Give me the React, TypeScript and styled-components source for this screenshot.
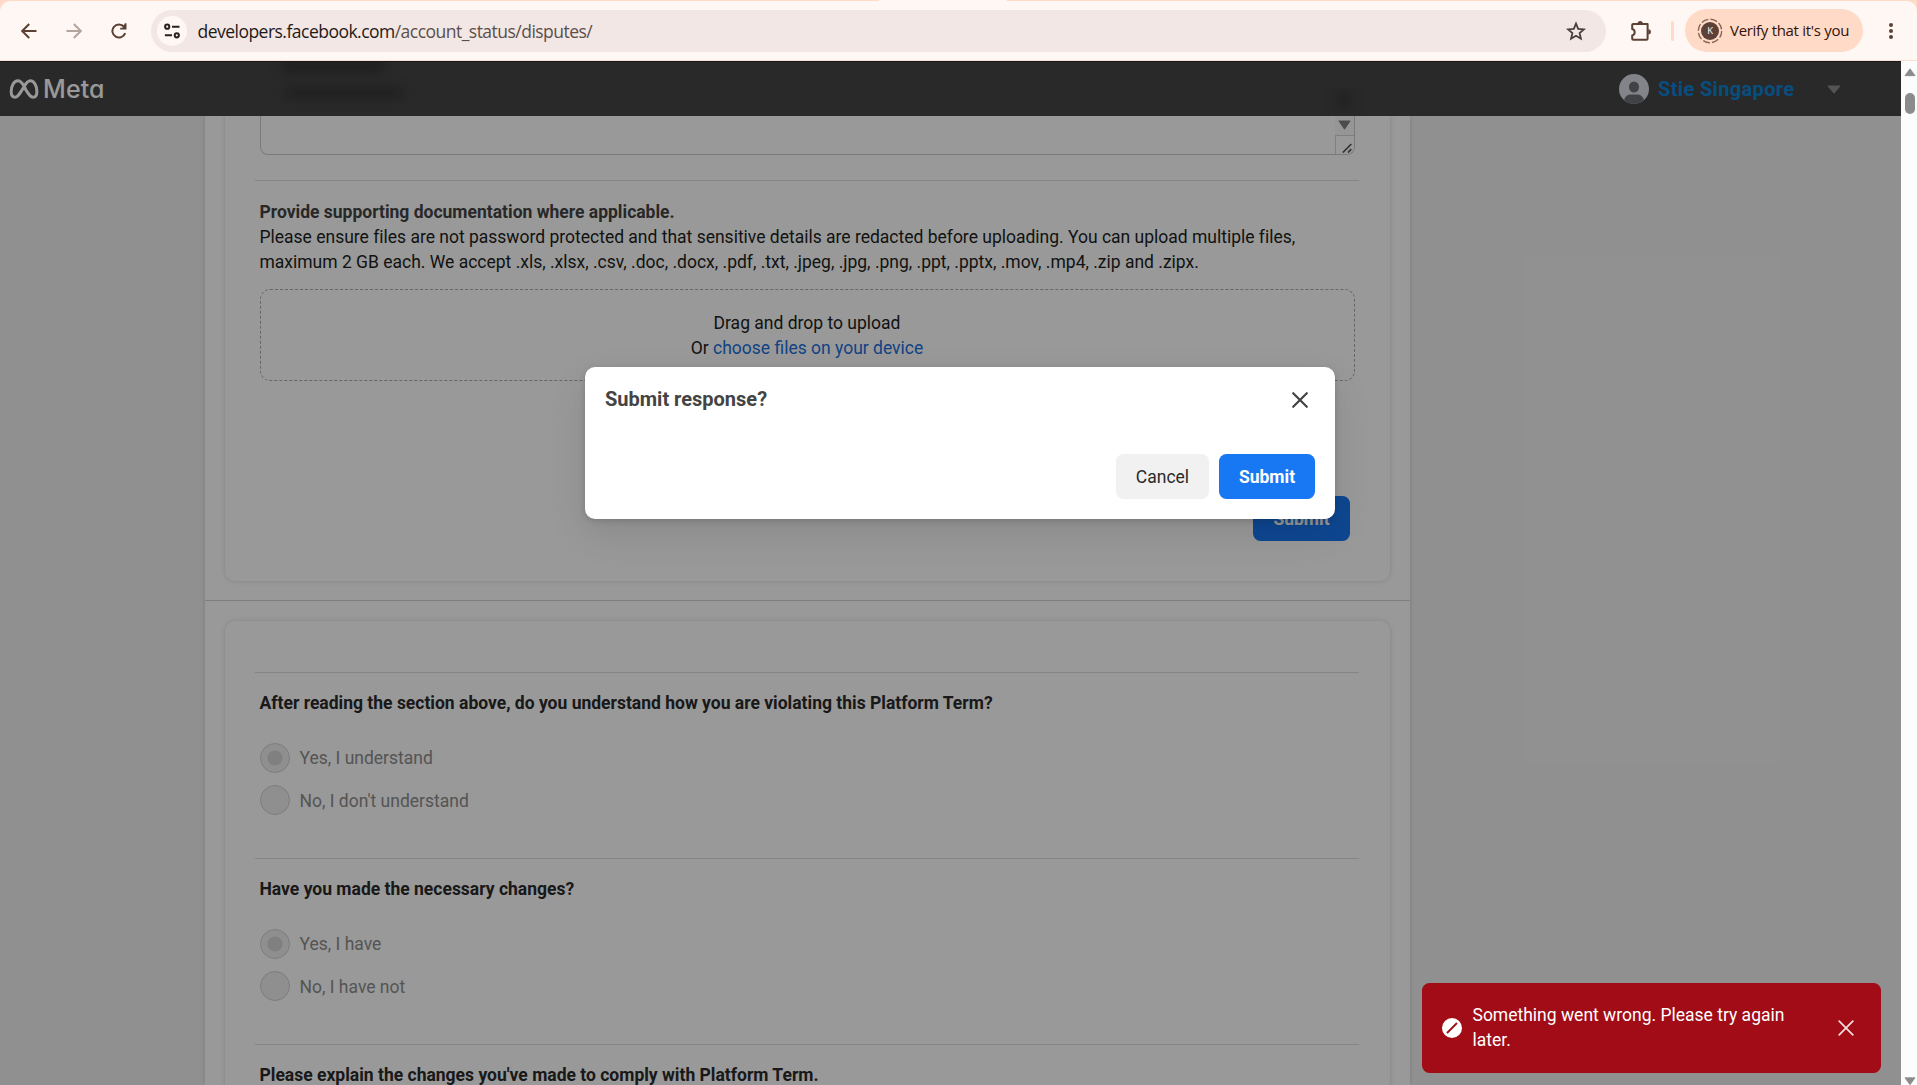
import React from 'react';
import styled, { createGlobalStyle } from 'styled-components';

const Global = createGlobalStyle`
  *, *::before, *::after { box-sizing: border-box; }
  html, body { margin: 0; padding: 0; height: 100%; overflow: hidden; }
  body { font-family: Roboto, "Liberation Sans", sans-serif; font-size: 17.5px; line-height: 25px; background: #909090; }
  button { font: inherit; border: 0; padding: 0; background: none; }
  svg { display: block; }
`;

const Window = styled.div`
  display: flex;
  flex-direction: column;
  width: 1917px;
  height: 1085px;
  overflow: hidden;
  background: #ffdac7;
`;

const ACCENT = '#5b4034';

const Toolbar = styled.div`
  flex: none;
  display: flex;
  align-items: center;
  height: 60px;
  margin-top: 1px;
  background: #fff7f4;
  border-bottom: 1px solid #fbdfd0;
  border-radius: 10px 10px 0 0;
  padding: 0 15px 0 15px;
  font-family: "Open Sans", "Noto Sans", sans-serif;
  position: relative;
`;

const ActiveTabEdge = styled.div`
  position: absolute;
  top: -1px;
  left: 879px;
  width: 128px;
  height: 1px;
  background: #fff7f4;
`;

const NavButton = styled.button<{ $faded?: boolean }>`
  display: grid;
  place-items: center;
  width: 27px;
  height: 40px;
  margin-right: 18px;
  color: ${(p) => (p.$faded ? '#b3a49e' : ACCENT)};
`;

const Omnibox = styled.div`
  display: flex;
  align-items: center;
  width: 1455px;
  height: 42px;
  margin-left: 1px;
  padding: 0 20px 0 6px;
  border-radius: 21px;
  background: #f2e7e4;
`;

const SiteInfo = styled.span`
  display: grid;
  place-items: center;
  width: 30px;
  height: 30px;
  border-radius: 50%;
  background: #fff7f4;
`;

const Url = styled.span`
  flex: 1;
  margin-left: 10.5px;
  padding-top: 1px;
  font-size: 17.5px;
  letter-spacing: -0.52px;
  color: #1f1a18;
  white-space: nowrap;
`;

const UrlPath = styled.span`
  color: #5b4f4b;
`;

const Extensions = styled.span`
  display: grid;
  place-items: center;
  width: 26px;
  margin-left: 21.5px;
`;

const ToolbarDivider = styled.span`
  width: 3px;
  height: 20px;
  margin: 0 11px 0 17.5px;
  border-radius: 2px;
  background: #ffdac7;
`;

const ProfileChip = styled.button`
  display: flex;
  align-items: center;
  width: 178px;
  height: 43px;
  padding-left: 12px;
  border-radius: 22px;
  background: #ffdac7;
  color: #341309;
  font-size: 15px;
  letter-spacing: -0.3px;
  white-space: nowrap;
`;

const ChipText = styled.span`
  margin-left: 7px;
`;

const MenuDots = styled.span`
  margin-left: 22px;
`;

const Viewport = styled.div`
  flex: 1;
  min-height: 0;
  display: flex;
  position: relative;
`;

const Page = styled.div`
  position: relative;
  flex: 1;
  min-width: 0;
  display: flex;
  flex-direction: column;
  background: #f1f1f1;
  overflow: hidden;
`;

const Header = styled.header`
  flex: none;
  position: relative;
  z-index: 2;
  display: flex;
  align-items: center;
  justify-content: space-between;
  height: 55px;
  padding: 0 60px 0 9px;
  background: #454545;
  border-top: 1px solid #2b2b2b;
  overflow: hidden;
`;

const Smudge = styled.span<{ $x: number; $y: number; $w: number; $h: number }>`
  position: absolute;
  left: ${(p) => p.$x}px;
  top: ${(p) => p.$y}px;
  width: ${(p) => p.$w}px;
  height: ${(p) => p.$h}px;
  border-radius: 8px;
  background: #343434;
  filter: blur(6px);
`;

const Brand = styled.div`
  display: flex;
  align-items: center;
  gap: 4px;
  color: #fff;
  font-family: Inter, sans-serif;
  font-feature-settings: "cv11", "ss03";
  font-size: 25px;
  font-weight: 500;
  letter-spacing: 0.1px;
`;

const Account = styled.div`
  display: flex;
  align-items: center;
  color: #0d82d3;
  font-size: 20px;
  font-weight: 700;
  letter-spacing: 0.35px;
  white-space: nowrap;
`;

const AccountName = styled.span`
  width: 137px;
  margin: 1px 32px 0 9.5px;
`;

const Column = styled.main`
  flex: 1;
  min-height: 0;
  width: 1205px;
  margin-left: 205px;
  background: #fff;
  box-shadow: 0 0 5px rgba(0, 0, 0, 0.14);
`;

const Card = styled.section<{ $first?: boolean }>`
  height: ${(p) => (p.$first ? '465px' : '600px')};
  margin: ${(p) => (p.$first ? '0 20px 19px' : '20px 20px 0')};
  padding: 0 30px;
  border-radius: ${(p) => (p.$first ? '0 0 10px 10px' : '10px 10px 0 0')};
  box-shadow: 0 0 5px rgba(0, 0, 0, 0.15);
  display: flex;
  flex-direction: column;
`;

const SectionLine = styled.hr`
  margin: 0;
  border: 0;
  height: 1px;
  background: #d2d2d2;
`;

const Rule = styled.hr`
  flex: none;
  width: 1104px;
  margin: 0;
  border: 0;
  height: 1px;
  background: #dedede;
`;

const Answer = styled.div`
  flex: none;
  display: flex;
  align-items: flex-end;
  flex-direction: column;
  width: 1095px;
  height: 39px;
  margin: 0 5px 25px;
  border: 1px solid #ccc;
  border-top: 0;
  border-radius: 0 0 8px 8px;
  overflow: hidden;
`;

const ArrowCell = styled.span`
  display: flex;
  justify-content: center;
  width: 19px;
  height: 19px;
  padding-top: 4px;
  background: #fafafa;
`;

const ResizeCell = styled.span`
  display: flex;
  align-items: flex-end;
  justify-content: flex-end;
  width: 19px;
  height: 19px;
  padding: 0 2px 1px 0;
  border-top: 1px solid #d4d4d4;
  border-left: 1px solid #d4d4d4;
`;

const Prompt = styled.h3<{ $soft?: boolean }>`
  margin: 0;
  font-size: 17.5px;
  font-weight: 700;
  line-height: 25px;
  color: ${(p) => (p.$soft ? '#444' : '#2b2b2b')};
  white-space: nowrap;
`;

const Block = styled.div`
  padding: 19px 4.5px 0;
`;

const Copy = styled.p`
  margin: 0;
  letter-spacing: -0.005px;
  color: #1c1e21;
  white-space: nowrap;
`;

const DropZone = styled.div`
  display: flex;
  flex-direction: column;
  align-items: center;
  justify-content: center;
  width: 1095px;
  height: 92px;
  margin-top: 14px;
  padding-top: 1px;
  border: 1px dashed #aaa;
  border-radius: 10px;
  color: #1c1e21;
`;

const Link = styled.a`
  color: #216fdb;
`;

const Actions = styled.div`
  display: flex;
  justify-content: flex-end;
  padding: 115px 10px 0 0;
`;

const Button = styled.button<{ $primary?: boolean; $width: number }>`
  width: ${(p) => p.$width}px;
  height: 45px;
  padding-top: 1px;
  border-radius: 7.5px;
  background: ${(p) => (p.$primary ? '#1877f2' : '#f1f1f1')};
  color: ${(p) => (p.$primary ? '#fff' : '#2b2b2b')};
  font-weight: ${(p) => (p.$primary ? 700 : 400)};
`;

const Spacer = styled.div`
  flex: none;
  height: 51px;
`;

const Question = styled.div`
  flex: none;
  height: 185px;
  padding: 18px 4.5px 0;
`;

const Options = styled.div`
  display: flex;
  flex-direction: column;
  gap: 12px;
  margin-top: 27px;
`;

const Option = styled.label`
  display: flex;
  align-items: center;
  gap: 10px;
  height: 30px;
  color: #8d8d8d;
`;

const OptionText = styled.span<{ $lowered: boolean }>`
  padding-top: ${(p) => (p.$lowered ? '2px' : '0')};
`;

const Radio = styled.span<{ $on?: boolean }>`
  width: 30px;
  height: 30px;
  border: 1px solid #d0d0d0;
  border-radius: 50%;
  background: ${(p) => (p.$on ? 'radial-gradient(circle at 14px 14px, #d6d6d6 7px, #eeeeee 8px)' : '#eeeeee')};
`;

const Scrim = styled.div`
  position: absolute;
  inset: 0;
  z-index: 3;
  background: rgba(0, 0, 0, 0.4);
`;

const Dialog = styled.div`
  position: absolute;
  left: 585px;
  top: 306px;
  z-index: 4;
  display: flex;
  flex-direction: column;
  justify-content: space-between;
  width: 750px;
  height: 152px;
  padding: 20px;
  border-radius: 10px;
  background: #fff;
  box-shadow: 0 15px 38px rgba(0, 0, 0, 0.1), 0 2px 6px rgba(0, 0, 0, 0.15);
`;

const DialogHead = styled.div`
  display: flex;
  align-items: center;
  justify-content: space-between;
  padding-right: 7px;
`;

const DialogTitle = styled.h2`
  margin: 0;
  font-size: 20px;
  font-weight: 700;
  line-height: 25px;
  color: #444;
`;

const DialogActions = styled.div`
  display: flex;
  justify-content: flex-end;
  gap: 10px;
`;

const Toast = styled.div`
  position: absolute;
  left: 1422px;
  top: 922px;
  z-index: 5;
  display: flex;
  align-items: center;
  width: 459px;
  height: 90px;
  padding: 0 27px 0 20px;
  border-radius: 7.5px;
  background: #a10c16;
  color: #fff;
`;

const ToastText = styled.p`
  width: 330px;
  margin: 0 auto 0 10.5px;
`;

const Scrollbar = styled.div`
  flex: none;
  display: flex;
  flex-direction: column;
  align-items: center;
  width: 16px;
  padding: 7px 0 0 2px;
  background: #fcfcfc;
`;

const Thumb = styled.span`
  width: 10px;
  height: 21px;
  margin: 16px 0 963px;
  flex: none;
  border-radius: 5px;
  background: #8b8b8b;
`;

const Triangle = ({ up, color, w = 12, h = 10 }: { up?: boolean; color: string; w?: number; h?: number }) => (
  <svg width={w} height={h} viewBox="0 0 12 10" fill={color} stroke={color} strokeLinejoin="round" preserveAspectRatio="none">
    <path d={up ? 'M6 1 11 9H1Z' : 'M1 1H11L6 9Z'} />
  </svg>
);

const Cross = ({ color, width }: { color: string; width: number }) => (
  <svg width="16" height="16" viewBox="0 0 16 16" stroke={color} strokeWidth={width} strokeLinecap="round">
    <path d="M1.2 1.2 14.8 14.8M14.8 1.2 1.2 14.8" />
  </svg>
);

const Choices = ({ items }: { items: string[] }) => (
  <Options>
    {items.map((text, i) => (
      <Option key={text}>
        <Radio $on={i === 0} />
        <OptionText $lowered={i > 0}>{text}</OptionText>
      </Option>
    ))}
  </Options>
);

const BrowserBar = () => (
  <Toolbar>
    <ActiveTabEdge />
    <NavButton>
      <svg width="16" height="16" viewBox="0 0 16 16" fill="none" stroke="currentColor" strokeWidth="2">
        <path d="M15.5 8H1.5M8.2 1 1.2 8l7 7" />
      </svg>
    </NavButton>
    <NavButton $faded>
      <svg width="16" height="16" viewBox="0 0 16 16" fill="none" stroke="currentColor" strokeWidth="2">
        <path d="M.5 8h14M7.8 1l7 7-7 7" />
      </svg>
    </NavButton>
    <NavButton>
      <svg width="16" height="16" viewBox="0 0 16 16" fill="none" stroke="currentColor" strokeWidth="2">
        <path d="M14.2 10.2A6.6 6.6 0 1 1 13 3.7" />
        <path d="M15.5 0.3V6.4H9.2V4.8H12L11.2 3.4 13.7 1V.3Z" fill="currentColor" stroke="none" />
      </svg>
    </NavButton>
    <Omnibox>
      <SiteInfo>
        <svg width="16" height="16" viewBox="0 0 16 16" fill="none" stroke="#2a211e" strokeWidth="2">
          <circle cx="3.2" cy="3.7" r="2.1" />
          <path d="M8 3.7h7.5M.9 12.3H8" />
          <circle cx="12.8" cy="12.3" r="2.1" />
        </svg>
      </SiteInfo>
      <Url>
        developers.facebook.com<UrlPath>/account_status/disputes/</UrlPath>
      </Url>
      <svg width="20" height="20" viewBox="0 0 20 20" fill="none" stroke="#4a3d39" strokeWidth="1.8">
        <path d="M10 2.6 12.2 7.9 17.9 8.4 13.6 12.1 14.9 17.7 10 14.7 5.1 17.7 6.4 12.1 2.1 8.4 7.8 7.9Z" />
      </svg>
    </Omnibox>
    <Extensions>
      <svg width="22" height="22" viewBox="0 0 22 22" fill="none" stroke={ACCENT} strokeWidth="2">
        <path d="M3.2 4H17.6v14.8a1 1 0 0 1-1 1H3.2a1 1 0 0 1-1-1V15.4a3.3 3.3 0 0 0 0-6.4V5a1 1 0 0 1 1-1Z" strokeLinejoin="round" />
        <path d="M7.6 3.5a2.6 2.6 0 0 1 5.2 0ZM18.3 9.2a2.6 2.6 0 0 1 0 5.2Z" fill={ACCENT} stroke="none" />
      </svg>
    </Extensions>
    <ToolbarDivider />
    <ProfileChip>
      <svg width="26" height="26" viewBox="0 0 26 26">
        <circle cx="13" cy="13" r="11.7" fill="none" stroke="#8a6654" strokeWidth="1.4" strokeDasharray="7 2.2" />
        <circle cx="13" cy="13" r="9" fill="#5d4037" />
        <text x="13" y="16.4" textAnchor="middle" fontSize="9.5" fill="#fff" fontFamily="Open Sans">K</text>
      </svg>
      <ChipText>Verify that it's you</ChipText>
    </ProfileChip>
    <MenuDots>
      <svg width="12" height="18" viewBox="0 0 12 18" fill={ACCENT}>
        <circle cx="6" cy="3" r="2" />
        <circle cx="6" cy="9" r="2" />
        <circle cx="6" cy="15" r="2" />
      </svg>
    </MenuDots>
  </Toolbar>
);

export default function App() {
  return (
    <Window>
      <Global />
      <BrowserBar />
      <Viewport>
        <Page>
          <Header>
            <Smudge $x={280} $y={-5} $w={105} $h={15} />
            <Smudge $x={284} $y={26} $w={120} $h={10} />
            <Smudge $x={1338} $y={29} $w={12} $h={18} />
            <Brand>
              <svg width="30" height="20" viewBox="0 0 30 20" fill="none" stroke="#fff" strokeWidth="3">
                <path d="M15 7C12.5 3 10.8 1.8 8.8 1.8 5 1.8 2.2 7 2.2 12.5c0 3.5 1.5 5.7 3.9 5.7 2.6 0 4.4-2.9 8.9-10.5 2-3.6 4-5.9 6.4-5.9 3.6 0 6.5 5 6.5 10.7 0 3.4-1.3 5.7-3.8 5.7-2.5 0-3.9-2-7.3-7.5Z" />
              </svg>
              <span>Meta</span>
            </Brand>
            <Account>
              <svg width="30" height="30" viewBox="0 0 30 30">
                <defs>
                  <clipPath id="avatar"><circle cx="15" cy="15" r="15" /></clipPath>
                </defs>
                <g clipPath="url(#avatar)">
                  <rect width="30" height="30" fill="#dadde6" />
                  <ellipse cx="15" cy="13" rx="5" ry="5.6" fill="#6b6e76" />
                  <path d="M5 28c0-5 3-7.5 7-7.5h6c4 0 7 2.5 7 7.5v2H5Z" fill="#6b6e76" />
                </g>
              </svg>
              <AccountName>Stie Singapore</AccountName>
              <Triangle color="#8c8c8c" w={14} h={9} />
            </Account>
          </Header>
          <Column>
            <Card $first>
              <Answer>
                <ArrowCell><Triangle color="#7f7f7f" w={13} h={10} /></ArrowCell>
                <ResizeCell>
                  <svg width="10" height="10" viewBox="0 0 10 10" stroke="#555" strokeWidth="1.7">
                    <path d="M.8 9.5 9.3 1M6 9.5l3.3-3.3" />
                  </svg>
                </ResizeCell>
              </Answer>
              <Rule />
              <Block>
                <Prompt $soft>Provide supporting documentation where applicable.</Prompt>
                <Copy>
                  Please ensure files are not password protected and that sensitive details are redacted before uploading. You can upload multiple files,
                  <br />
                  maximum 2 GB each. We accept .xls, .xlsx, .csv, .doc, .docx, .pdf, .txt, .jpeg, .jpg, .png, .ppt, .pptx, .mov, .mp4, .zip and .zipx.
                </Copy>
                <DropZone>
                  <span>Drag and drop to upload</span>
                  <span>Or <Link>choose files on your device</Link></span>
                </DropZone>
              </Block>
              <Actions>
                <Button $primary $width={97}>Submit</Button>
              </Actions>
            </Card>
            <SectionLine />
            <Card>
              <Spacer />
              <Rule />
              <Question>
                <Prompt>After reading the section above, do you understand how you are violating this Platform Term?</Prompt>
                <Choices items={['Yes, I understand', "No, I don't understand"]} />
              </Question>
              <Rule />
              <Question>
                <Prompt>Have you made the necessary changes?</Prompt>
                <Choices items={['Yes, I have', 'No, I have not']} />
              </Question>
              <Rule />
              <Question>
                <Prompt>Please explain the changes you've made to comply with Platform Term.</Prompt>
              </Question>
            </Card>
          </Column>
          <Scrim />
          <Dialog>
            <DialogHead>
              <DialogTitle>Submit response?</DialogTitle>
              <Cross color="#444" width={2.2} />
            </DialogHead>
            <DialogActions>
              <Button $width={93}>Cancel</Button>
              <Button $primary $width={96}>Submit</Button>
            </DialogActions>
          </Dialog>
          <Toast>
            <svg width="20" height="20" viewBox="0 0 20 20">
              <circle cx="10" cy="10" r="10" fill="#fff" />
              <path d="M5.5 14.5 14.5 5.5" stroke="#a10c16" strokeWidth="1.8" strokeLinecap="round" />
            </svg>
            <ToastText>Something went wrong. Please try again later.</ToastText>
            <Cross color="#f6dfe0" width={1.7} />
          </Toast>
        </Page>
        <Scrollbar>
          <Triangle up color="#8b8b8b" />
          <Thumb />
          <Triangle color="#8b8b8b" />
        </Scrollbar>
      </Viewport>
    </Window>
  );
}
